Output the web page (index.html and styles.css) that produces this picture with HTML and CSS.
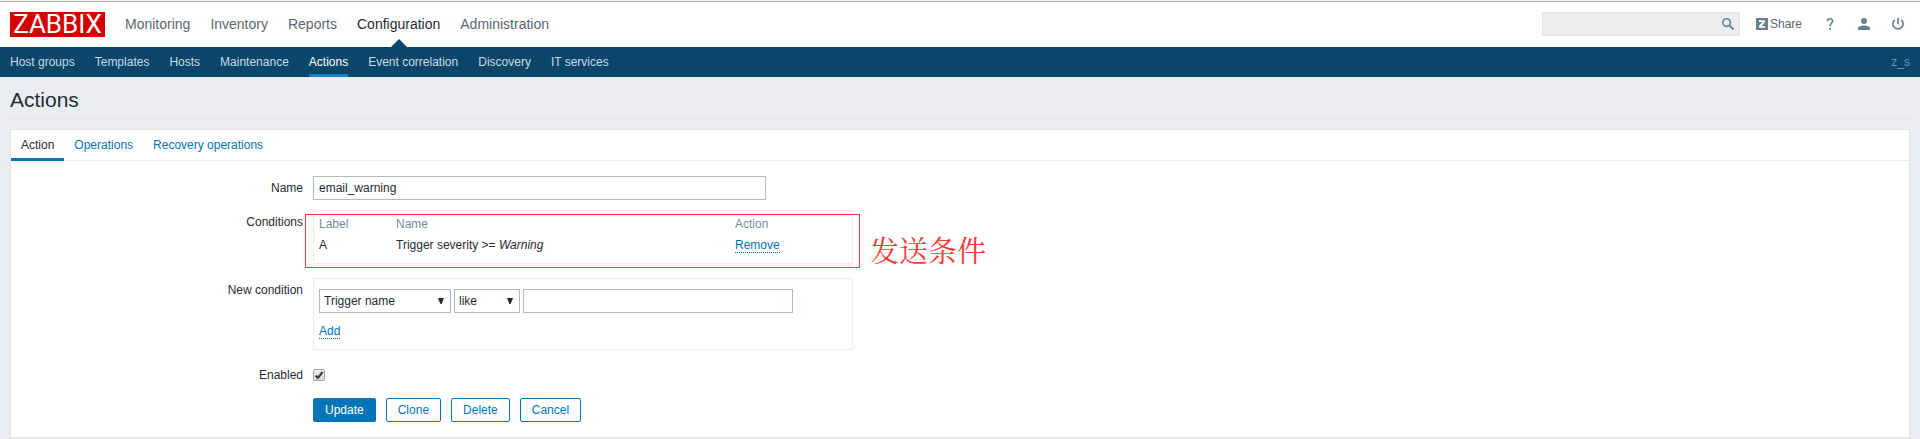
FILE: index.html
```
<!DOCTYPE html>
<html lang="en">
<head>
<meta charset="utf-8">
<title>Configuration of actions</title>
<link rel="stylesheet" href="styles.css">
</head>
<body>
<header class="top">
  <a class="logo" href="#">ZABBIX</a>
  <nav class="main-nav" aria-label="Main">
    <a href="#">Monitoring</a>
    <a href="#">Inventory</a>
    <a href="#">Reports</a>
    <a href="#" class="selected">Configuration</a>
    <a href="#">Administration</a>
  </nav>
  <form class="search">
    <input type="text" aria-label="Search">
    <button type="button" aria-label="Search">
      <svg width="12" height="12" viewBox="0 0 12 12"><circle cx="4.6" cy="4.6" r="3.8" fill="none" stroke="currentColor" stroke-width="1.6"/><path d="M7.4 7.4L11.4 11.4" stroke="currentColor" stroke-width="2"/></svg>
    </button>
  </form>
  <a class="share" href="#">
    <svg width="12" height="12" viewBox="0 0 12 12"><rect width="12" height="12" fill="#6c808c"/><path d="M3 2.2H9V4L5.6 8H9V9.8H3V8L6.3 4H3Z" fill="#fff"/></svg>
    <span>Share</span>
  </a>
  <a class="tool" href="#" aria-label="Help">
    <svg width="12" height="12" viewBox="0 0 12 12"><path d="M3.4 3.2C3.4 1.6 4.5 .8 6 .8S8.6 1.6 8.6 3.1C8.6 5.2 6 5.2 6 8.4" fill="none" stroke="currentColor" stroke-width="1.6"/><rect x="5.1" y="10" width="1.8" height="2" fill="currentColor"/></svg>
  </a>
  <a class="tool" href="#" aria-label="Profile">
    <svg width="12" height="12" viewBox="0 0 12 12"><circle cx="6" cy="3" r="3" fill="currentColor"/><path d="M0 12V10.4C0 8.6 3.4 7.6 6 7.6S12 8.6 12 10.4V12Z" fill="currentColor"/></svg>
  </a>
  <a class="tool" href="#" aria-label="Sign out">
    <svg width="12" height="12" viewBox="0 0 12 12"><path d="M2.9 1.8A5.1 5.1 0 1 0 9.1 1.8M6 0V6.2" fill="none" stroke="currentColor" stroke-width="1.7"/></svg>
  </a>
</header>
<div class="sub">
  <nav class="sub-nav" aria-label="Configuration">
    <a href="#">Host groups</a>
    <a href="#">Templates</a>
    <a href="#">Hosts</a>
    <a href="#">Maintenance</a>
    <a href="#" class="selected">Actions</a>
    <a href="#">Event correlation</a>
    <a href="#">Discovery</a>
    <a href="#">IT services</a>
  </nav>
  <span class="server">z_s</span>
</div>
<main class="page">
  <h1>Actions</h1>
  <div class="card">
    <nav class="tabs" aria-label="Action sections">
      <a href="#" class="selected">Action</a>
      <a href="#">Operations</a>
      <a href="#">Recovery operations</a>
    </nav>
    <form class="form">
      <div class="row">
        <label for="name">Name</label>
        <input class="name" id="name" type="text" value="email_warning">
      </div>
      <div class="row conditions">
        <span class="label">Conditions</span>
        <div class="box">
          <table>
            <thead><tr><th class="c-label">Label</th><th class="c-name">Name</th><th>Action</th></tr></thead>
            <tbody><tr><td>A</td><td>Trigger severity &gt;= <em>Warning</em></td><td><a class="dotted" href="#">Remove</a></td></tr></tbody>
          </table>
          <div class="mark"><span lang="zh">发送条件</span></div>
        </div>
      </div>
      <div class="row">
        <span class="label">New condition</span>
        <div class="box new">
          <div class="fields">
            <select class="s-type" aria-label="Condition type"><option>Trigger name</option></select>
            <select class="s-op" aria-label="Operator"><option>like</option></select>
            <input class="value" type="text" aria-label="Value">
          </div>
          <a class="dotted" href="#">Add</a>
        </div>
      </div>
      <div class="row enabled">
        <label for="enabled">Enabled</label>
        <input id="enabled" type="checkbox" checked>
      </div>
      <div class="row buttons">
        <button type="button" class="primary">Update</button>
        <button type="button">Clone</button>
        <button type="button">Delete</button>
        <button type="button">Cancel</button>
      </div>
    </form>
  </div>
</main>
</body>
</html>
```
FILE: styles.css
```
* { box-sizing: border-box; }
body {
  margin: 0;
  background: #e9eef1;
  color: #1f2c33;
  font: 12px/14px "Liberation Sans", Arial, sans-serif;
}
a { color: #0275b8; text-decoration: none; }
input, select, button { font: inherit; color: inherit; margin: 0; }
svg { display: block; }

.top {
  display: flex;
  align-items: center;
  height: 47px;
  padding: 2px 16px 0 10px;
  background: #fff linear-gradient(#f2f2f2 1px, #b2b2b2 1px, #b2b2b2 2px, #fff 2px);
  color: #6c808c;
}
.logo {
  width: 95px;
  height: 25px;
  background: #d40000;
  color: #fff;
  font: 26px/25px Roboto, sans-serif;
  text-align: center;
}
.main-nav { display: flex; align-self: stretch; gap: 20px; margin-left: 20px; }
.main-nav a { position: relative; color: #5a676f; font-size: 14px; line-height: 44px; }
.main-nav .selected { color: #1f2c33; }
.main-nav .selected::after {
  content: "";
  position: absolute;
  left: 50%;
  bottom: 0;
  margin-left: -8px;
  border: solid transparent;
  border-width: 0 8px 8px;
  border-bottom-color: #0a466a;
}
.search { position: relative; margin: 0 0 1px auto; }
.search input {
  display: block;
  width: 198px;
  height: 24px;
  padding: 0 24px 0 5px;
  border: 1px solid #dfe4e7;
  background: #ededed;
}
.search button {
  position: absolute;
  top: 6px;
  right: 6px;
  padding: 0;
  border: 0;
  background: none;
}
.share { display: flex; gap: 2px; margin: 0 0 1px 16px; color: #5a676f; line-height: 12px; }
.tool { margin: 0 0 1px 22px; color: #6c808c; }

.sub {
  display: flex;
  justify-content: space-between;
  height: 30px;
  padding: 0 10px;
  background: #0a466a;
  line-height: 30px;
}
.sub-nav { display: flex; gap: 20px; }
.sub-nav a { color: #c8dbe6; }
.sub-nav .selected { color: #fff; box-shadow: inset 0 -3px #1282c9; }
.server { color: #6c93aa; }

.page { padding: 0 10px 1px; }
h1 {
  margin: 0 0 10px;
  padding: 11px 0 6px;
  border-bottom: 1px solid #dfe4e7;
  font-size: 21px;
  line-height: 24px;
  font-weight: normal;
}
.card { background: #fff; border: 1px solid #dfe4e7; }
.tabs { display: flex; height: 31px; border-bottom: 1px solid #e9eef1; }
.tabs a { height: 31px; padding: 0 10px; line-height: 30px; }
.tabs .selected { color: #1f2c33; border-bottom: 3px solid #0275b8; }

.form { display: grid; gap: 10px; padding: 15px 0; }
.row { display: flex; align-items: flex-start; }
.row > label, .row > .label { width: 292px; margin-right: 10px; padding-top: 5px; text-align: right; }
.name, .value { height: 24px; padding: 0 5px; border: 1px solid #acbbc2; background: #fff; }
.name { width: 453px; }
.box { position: relative; width: 540px; border: 1px solid #ebedef; padding: 5px; }
.conditions { padding-bottom: 4px; }
.conditions .box { height: 54px; padding-top: 6px; }
table { width: 100%; border-collapse: collapse; table-layout: fixed; }
th { padding: 0 0 7px; color: #768d99; font-weight: normal; text-align: left; }
td { padding: 0; vertical-align: baseline; }
.c-label { width: 77px; }
.c-name { width: 339px; }
.dotted { display: inline-block; border-bottom: 1px dotted #0275b8; line-height: 14px; }
.mark {
  position: absolute;
  top: 3px;
  left: -9px;
  width: 555px;
  height: 54px;
  border: 1px solid #fb3a3a;
  pointer-events: none;
}
.mark span {
  position: absolute;
  left: 100%;
  top: 15px;
  margin-left: 11px;
  color: #fb3a3a;
  font: 29px/40px "Noto Serif CJK SC", "Noto Sans CJK SC", serif;
  white-space: nowrap;
}
.new { padding: 10px 5px; }
.fields { display: flex; gap: 3px; margin-bottom: 11px; }
select {
  height: 24px;
  padding: 0 4px;
  border: 1px solid #acbbc2;
  border-radius: 0;
  appearance: none;
  background: #fff url("data:image/svg+xml,%3Csvg xmlns='http://www.w3.org/2000/svg' width='6' height='6'%3E%3Cpath d='M0 0H6L3.6 6H2.4Z' fill='%231f2c33'/%3E%3C/svg%3E") no-repeat right 6px center;
}
.s-type { width: 132px; }
.s-op { width: 66px; }
.value { width: 270px; }
.enabled { height: 28px; padding-top: 2px; align-items: center; }
.enabled > label { padding: 0; }
.enabled input {
  appearance: none;
  width: 12px;
  height: 12px;
  border: 1px solid #a6a6a6;
  border-radius: 2px;
  background: url("data:image/svg+xml,%3Csvg xmlns='http://www.w3.org/2000/svg' width='10' height='10'%3E%3Cpath d='M1.6 5.6L4 7.8L8.6 1.8' fill='none' stroke='%23404040' stroke-width='2.2'/%3E%3C/svg%3E") center, linear-gradient(#eee, #dcdcdc);
}
.buttons { gap: 10px; padding-left: 302px; }
.buttons button {
  height: 24px;
  padding: 0 11px;
  border: 1px solid #0275b8;
  border-radius: 2px;
  background: #fff;
  color: #0275b8;
}
.buttons .primary { background: #0275b8; color: #fff; }
```
